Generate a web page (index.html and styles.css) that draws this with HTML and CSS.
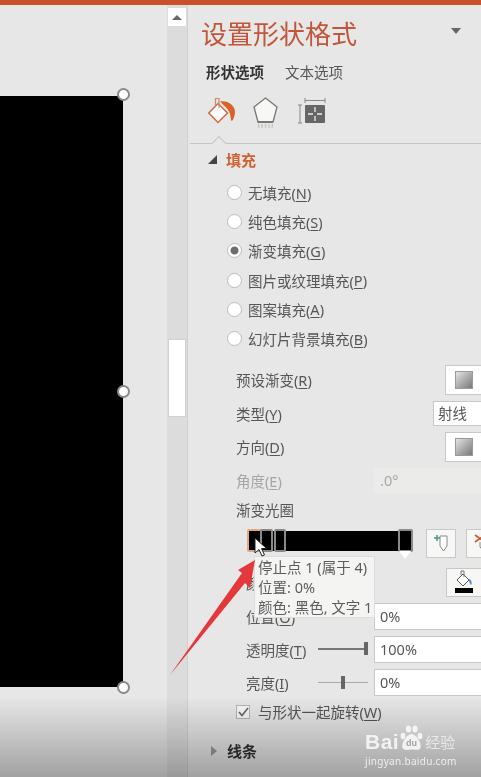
FILE: index.html
```html
<!DOCTYPE html>
<html lang="zh-CN">
<head>
    <meta charset="UTF-8">
    <meta name="viewport" content="width=device-width, initial-scale=1.0">
    <title>设置形状格式</title>
    <link rel="stylesheet" href="styles.css">
</head>
<body>
    <div class="app">
        <div class="top-bar"></div>
        <div class="workspace">
            <div class="canvas">
                <div class="shape"></div>
                <span class="handle handle-top"></span>
                <span class="handle handle-mid"></span>
                <span class="handle handle-bottom"></span>
            </div>

            <div class="scrollbar">
                <div class="scroll-up"><span class="tri-up"></span></div>
                <div class="scroll-thumb"></div>
            </div>

            <div class="pane">
                <div class="pane-title">
                    <h1>设置形状格式</h1>
                    <span class="tri-down"></span>
                </div>
                <div class="pane-tabs">
                    <span class="tab active">形状选项</span>
                    <span class="tab">文本选项</span>
                </div>
                <div class="icon-tabs">
                    <svg class="icon-fill" width="28" height="28" viewBox="0 0 28 28">
                        <path d="M0.8 16 L10 6.5 L19.5 16 L10 25.5 Z" fill="#fff" stroke="#d2683f" stroke-width="1.5"/>
                        <path d="M7.5 8 V1.5 H11 V11" fill="none" stroke="#c98a70" stroke-width="1.2"/>
                        <path d="M12 4.5 C19 3 27 8 27 15 C27 19 25 24 23.5 24 C22 20 23 15 18.5 11 Z" fill="#d9622b"/>
                    </svg>
                    <svg class="icon-shape" width="25" height="32" viewBox="0 0 25 32">
                        <path d="M12.5 1 L24 10 L20 25 H5 L1 10 Z" fill="#f7f7f6" stroke="#777" stroke-width="1.3"/>
                        <path d="M5 25 H20" stroke="#777" stroke-width="2"/>
                        <path d="M5.5 27 L6 31 M9 27 V31 M12.5 27 V31 M16 27 V31 M19.5 27 L19 31" stroke="#c4c4c2" stroke-width="1.2"/>
                    </svg>
                    <svg class="icon-size" width="28" height="28" viewBox="0 0 28 28">
                        <path d="M7 3.5 H27 M7 1 V6 M27 1 V6 M2 8 V26 M0 8 H4 M0 26 H4" stroke="#888" fill="none"/>
                        <rect x="7" y="8" width="20" height="18" rx="1" fill="#666"/>
                        <path d="M17 10 V15 M17 19 V24 M10 17 H15 M19 17 H24" stroke="#eee" stroke-width="1.3"/>
                    </svg>
                    <span class="notch"></span>
                </div>

                <div class="section-head open"><span class="tri-open"></span>填充</div>

                <div class="radios">
                    <div class="radio-row"><span class="radio"></span>无填充(<u>N</u>)</div>
                    <div class="radio-row"><span class="radio"></span>纯色填充(<u>S</u>)</div>
                    <div class="radio-row"><span class="radio checked"></span>渐变填充(<u>G</u>)</div>
                    <div class="radio-row"><span class="radio"></span>图片或纹理填充(<u>P</u>)</div>
                    <div class="radio-row"><span class="radio"></span>图案填充(<u>A</u>)</div>
                    <div class="radio-row"><span class="radio"></span>幻灯片背景填充(<u>B</u>)</div>
                </div>

                <div class="form">
                    <div class="form-row">
                        <label class="w-preset">预设渐变(<u>R</u>)</label>
                        <div class="swatch-btn"><span class="swatch"></span></div>
                    </div>
                    <div class="form-row">
                        <label class="w-type">类型(<u>Y</u>)</label>
                        <div class="select">射线</div>
                    </div>
                    <div class="form-row">
                        <label class="w-preset">方向(<u>D</u>)</label>
                        <div class="swatch-btn"><span class="swatch"></span></div>
                    </div>
                    <div class="form-row disabled">
                        <label class="w-input">角度(<u>E</u>)</label>
                        <div class="input">.0°</div>
                    </div>
                    <div class="form-row stops-label"><label>渐变光圈</label></div>

                    <div class="stops-row">
                        <div class="stops-bar">
                            <span class="stop stop-1"></span>
                            <span class="stop stop-2"></span>
                            <span class="stop stop-3"></span>
                            <span class="stop stop-4"></span>
                        </div>
                        <div class="stop-btn">
                            <svg width="16" height="20" viewBox="0 0 16 20">
                                <path d="M1 5 H7 M4 2 V8" stroke="#3d9a86" stroke-width="1.5"/>
                                <path d="M7 3 H14 V13 L10.5 18 L7 13 Z" fill="#fff" stroke="#888"/>
                            </svg>
                        </div>
                        <div class="stop-btn stop-remove">
                            <svg width="16" height="20" viewBox="0 0 16 20">
                                <path d="M7 9 V14 L10.5 18 L14 14 V9" fill="none" stroke="#888"/>
                                <path d="M2 2 L12 9 M12 2 L2 9" stroke="#d2562b" stroke-width="1.6"/>
                            </svg>
                        </div>
                    </div>

                    <div class="form-row color-row">
                        <label class="w-color">颜色(<u>C</u>)</label>
                        <div class="color-btn">
                            <svg width="20" height="24" viewBox="0 0 20 24">
                                <path d="M3 10 L9 4 L15 10 L9 16 Z" fill="#fff" stroke="#555"/>
                                <path d="M7 5 V1 H10 V7" fill="none" stroke="#777"/>
                                <path d="M15 9 C18 10 18 14 17 15 C16 14 15 12 15 9 Z" fill="#3c86c4"/>
                                <rect x="1" y="18" width="18" height="5" fill="#000"/>
                            </svg>
                        </div>
                    </div>
                    <div class="form-row value-row">
                        <label class="w-value">位置(<u>O</u>)</label>
                        <div class="input">0%</div>
                    </div>
                    <div class="form-row value-row">
                        <label class="w-slider">透明度(<u>T</u>)</label>
                        <div class="slider"><span class="thumb thumb-end"></span></div>
                        <div class="input">100%</div>
                    </div>
                    <div class="form-row value-row">
                        <label class="w-slider">亮度(<u>I</u>)</label>
                        <div class="slider light"><span class="thumb thumb-mid"></span></div>
                        <div class="input">0%</div>
                    </div>
                    <div class="check-row">
                        <span class="checkbox">
                            <svg width="11" height="10" viewBox="0 0 11 10"><path d="M1 5 L4 8.5 L10 1" fill="none" stroke="#666" stroke-width="1.6"/></svg>
                        </span>
                        与形状一起旋转(<u>W</u>)
                    </div>
                </div>

                <div class="section-head closed"><span class="tri-closed"></span>线条</div>
            </div>
        </div>

        <div class="shade"></div>

        <!-- 提示框和标注箭头 -->
        <div class="tooltip">
            <div>停止点 1 (属于 4)</div>
            <div>位置: 0%</div>
            <div>颜色: 黑色, 文字 1</div>
        </div>
        <svg class="cursor" width="14" height="20" viewBox="0 0 14 20">
            <path d="M1 1 V16 L5 12.5 L8 19 L10.5 18 L7.5 11.5 L12.5 11.5 Z" fill="#fff" stroke="#222"/>
        </svg>
        <svg class="arrow" width="90" height="125" viewBox="0 0 90 125">
            <path d="M87 3 L70 13 L74 16 L2 118 L77 26 L82 31 Z" fill="#e5383b"/>
        </svg>

        <div class="watermark">
            <div class="wm-top">
                <span class="wm-bai">Bai</span>
                <svg class="wm-paw" width="23" height="26" viewBox="0 0 23 26">
                    <ellipse cx="3" cy="11" rx="2.4" ry="3.2" fill="#fff"/>
                    <ellipse cx="8.5" cy="4" rx="2.6" ry="3.6" fill="#fff"/>
                    <ellipse cx="15" cy="4" rx="2.6" ry="3.6" fill="#fff"/>
                    <ellipse cx="20" cy="11" rx="2.4" ry="3.2" fill="#fff"/>
                    <path d="M11.5 9 C16 9 22 18 20.5 23 C19 26 14 24.5 11.5 24.5 C9 24.5 4 26 2.5 23 C1 18 7 9 11.5 9 Z" fill="#fff"/>
                    <text x="11.5" y="21" text-anchor="middle" class="wm-du">du</text>
                </svg>
                <span class="wm-cn">经验</span>
            </div>
            <div class="wm-url">jingyan.baidu.com</div>
        </div>
    </div>
</body>
</html>
```

FILE: styles.css
```css
:root {
    --panel: #e6e7e6;
    --text: #565656;
    --accent: #c0563a;
    --orange: #d2622f;
    --border: #c8c8c6;
}

* {
    box-sizing: border-box;
}

body {
    margin: 0;
    font-family: "Noto Sans", "Noto Sans CJK SC", sans-serif;
    font-size: 14.5px;
    color: var(--text);
    background: var(--panel);
}

.app {
    position: relative;
    width: 481px;
    height: 777px;
    overflow: hidden;
    background: var(--panel);
    filter: blur(0.4px);
}

.top-bar {
    height: 5px;
    background: #c9512a;
}

.workspace {
    display: flex;
    height: 772px;
}

/* 画布 */
.canvas {
    position: relative;
    width: 167px;
    flex: none;
}

.shape {
    position: absolute;
    left: 0;
    top: 91px;
    width: 123px;
    height: 591px;
    background: #000;
}

.handle {
    position: absolute;
    left: 117px;
    width: 13px;
    height: 13px;
    border-radius: 50%;
    background: #fff;
    border: 2px solid #8a8a88;
}

.handle-top { top: 83px; }
.handle-mid { top: 380px; }
.handle-bottom { top: 676px; }

/* 滚动条 */
.scrollbar {
    width: 21px;
    flex: none;
    padding: 3px 1px 0;
    background: #dbdcdb;
    border-right: 1px solid #cfd0cf;
}

.scroll-up {
    display: flex;
    align-items: center;
    justify-content: center;
    height: 18px;
    background: #fff;
}

.tri-up {
    border-left: 5px solid transparent;
    border-right: 5px solid transparent;
    border-bottom: 5px solid #666;
}

.scroll-thumb {
    height: 78px;
    margin-top: 313px;
    background: #fff;
    border: 1px solid #cfd0cf;
}

/* 右侧面板 */
.pane {
    flex: 1;
    min-width: 0;
    overflow: hidden;
    padding-top: 12px;
    background: var(--panel);
}

.pane-title {
    display: flex;
    align-items: center;
    justify-content: space-between;
    height: 34px;
    padding: 0 20px 0 13px;
}

.pane-title h1 {
    margin: 0;
    font-size: 26px;
    font-weight: 400;
    line-height: 34px;
    color: var(--accent);
}

.tri-down {
    margin-bottom: 6px;
    border-left: 5px solid transparent;
    border-right: 5px solid transparent;
    border-top: 6px solid #666;
}

.pane-tabs {
    display: flex;
    gap: 21px;
    height: 24px;
    margin-top: 9px;
    padding-left: 18px;
    line-height: 24px;
}

.tab.active {
    font-weight: 700;
    color: #333;
}

.icon-tabs {
    position: relative;
    display: flex;
    align-items: flex-start;
    height: 60px;
    padding: 13px 0 0 18px;
    margin-left: 2px;
    border-bottom: 1px solid #c4c5c4;
}

.icon-shape {
    margin-left: 17px;
}

.icon-size {
    margin-left: 20px;
}

.notch {
    position: absolute;
    left: 24px;
    bottom: -5px;
    width: 10px;
    height: 10px;
    background: var(--panel);
    border-left: 1px solid #c4c5c4;
    border-top: 1px solid #c4c5c4;
    transform: rotate(45deg);
}

.section-head {
    display: flex;
    align-items: center;
    height: 24px;
    font-size: 15px;
    font-weight: 700;
    padding-left: 20px;
}

.section-head.open {
    margin-top: 3px;
    color: var(--orange);
}

.section-head.closed {
    margin-top: 14px;
    color: #333;
}

.tri-open {
    width: 0;
    height: 0;
    margin-right: 9px;
    border-left: 9px solid transparent;
    border-bottom: 9px solid #444;
}

.tri-closed {
    width: 0;
    height: 0;
    margin: 0 10px 0 3px;
    border-top: 5px solid transparent;
    border-bottom: 5px solid transparent;
    border-left: 6px solid #999;
}

.radios {
    margin-top: 7px;
}

.radio-row {
    display: flex;
    align-items: center;
    height: 29.2px;
    padding-left: 39px;
}

.radio {
    width: 15px;
    height: 15px;
    margin-right: 6px;
    border-radius: 50%;
    background: #fff;
    border: 1px solid #bdbdbb;
}

.radio.checked {
    background: radial-gradient(circle, #6e6e6e 0 3.5px, #fff 4.5px);
}

u {
    text-underline-offset: 2px;
}

.form {
    margin-top: 9.8px;
    padding-left: 48px;
}

.form-row {
    display: flex;
    align-items: center;
    height: 33.5px;
}

.form-row label {
    flex: none;
}

.w-preset { width: 209px; }
.w-type { width: 197px; }
.w-input { width: 138px; }
.w-color { width: 200px; margin-left: 10px; }
.w-value { width: 128px; margin-left: 10px; }
.w-slider { width: 72px; margin-left: 10px; }

.swatch-btn {
    display: flex;
    align-items: center;
    width: 60px;
    height: 30px;
    flex: none;
    padding-left: 9px;
    background: #fff;
    border: 1px solid var(--border);
}

.swatch {
    width: 18px;
    height: 18px;
    background: linear-gradient(135deg, #e4e4e4, #777);
    border: 1px solid #999;
}

.select {
    width: 70px;
    height: 25px;
    flex: none;
    padding-left: 4px;
    line-height: 23px;
    background: #fff;
    border: 1px solid var(--border);
}

.input {
    width: 130px;
    height: 27px;
    flex: none;
    padding-left: 5px;
    line-height: 25px;
    background: #fff;
    border: 1px solid var(--border);
}

.disabled {
    color: #a5a5a5;
}

.disabled .input {
    height: 25px;
    line-height: 23px;
    background: #ebecea;
    border-color: #ebecea;
}

.stops-label {
    height: 26px;
}

.stops-row {
    display: flex;
    align-items: flex-start;
    height: 45px;
    padding-top: 6px;
    margin-left: 12px;
}

.stops-bar {
    position: relative;
    width: 165px;
    height: 20px;
    flex: none;
    margin-top: 2px;
    background: #000;
}

.stop {
    position: absolute;
    top: -2px;
    height: 23px;
    border: 2px solid #8a8a88;
    border-radius: 2px;
}

.stop-1 {
    left: -1px;
    width: 15px;
    border-color: #e2a878;
}

.stop-2 { left: 12px; width: 13px; }
.stop-3 { left: 26px; width: 12px; }
.stop-4 { left: 150px; width: 15px; }

.stop-4::after {
    content: "";
    position: absolute;
    left: -1px;
    top: 20px;
    border-left: 6.5px solid transparent;
    border-right: 6.5px solid transparent;
    border-top: 8px solid #fff;
}

.stop-btn {
    display: flex;
    align-items: center;
    justify-content: center;
    width: 30px;
    height: 29px;
    flex: none;
    margin-left: 13px;
    background: #f7f7f6;
    border: 1px solid var(--border);
}

.stop-remove {
    margin-left: 10px;
}

.color-row {
    height: 29px;
}

.color-btn {
    display: flex;
    align-items: center;
    width: 60px;
    height: 29px;
    flex: none;
    padding-left: 7px;
    background: #f7f7f6;
    border: 1px solid var(--border);
}

.value-row {
    height: 27px;
    margin-top: 6px;
}

.slider {
    position: relative;
    width: 50px;
    height: 2px;
    flex: none;
    margin-right: 6px;
    background: #777;
}

.slider.light {
    height: 1px;
    background: #aaa;
}

.thumb {
    position: absolute;
    top: -6px;
    width: 4px;
    height: 13px;
    background: #666;
}

.thumb-end { right: 0; }
.thumb-mid { left: 23px; }

.check-row {
    display: flex;
    align-items: center;
    height: 26px;
    margin-top: 3px;
}

.checkbox {
    display: flex;
    align-items: center;
    justify-content: center;
    width: 14px;
    height: 14px;
    margin-right: 8px;
    background: #f7f7f6;
    border: 1px solid #b5b5b3;
}

/* 底部渐暗 */
.shade {
    position: absolute;
    left: 0;
    right: 0;
    bottom: 0;
    height: 80px;
    background: linear-gradient(rgba(0, 0, 0, 0), rgba(0, 0, 0, 0.3));
    pointer-events: none;
}

.tooltip {
    position: absolute;
    left: 254px;
    top: 556px;
    width: 121px;
    height: 62px;
    padding: 0 3px;
    font-size: 14.5px;
    line-height: 20px;
    color: #5d5d5d;
    white-space: nowrap;
    background: #f4f4f3;
    border: 1px solid #dcdcda;
}

.cursor {
    position: absolute;
    left: 254px;
    top: 537px;
}

.arrow {
    position: absolute;
    left: 168px;
    top: 557px;
}

.watermark {
    position: absolute;
    left: 365px;
    top: 725px;
    color: #fff;
    opacity: 0.8;
}

.wm-top {
    display: flex;
    align-items: flex-end;
    height: 26px;
}

.wm-bai {
    font-family: "Liberation Sans", sans-serif;
    font-size: 21px;
    font-weight: 700;
    line-height: 18px;
    letter-spacing: 0.5px;
}

.wm-du {
    font-family: "Liberation Sans", sans-serif;
    font-size: 9px;
    font-weight: 700;
    fill: #9a9a98;
}

.wm-paw {
    margin-left: 1px;
}

.wm-cn {
    margin-left: 2px;
    font-size: 15px;
    line-height: 18px;
    color: #f1f1f1;
}

.wm-url {
    margin-top: 3px;
    font-size: 10px;
    line-height: 14px;
    letter-spacing: 0.3px;
}
```
